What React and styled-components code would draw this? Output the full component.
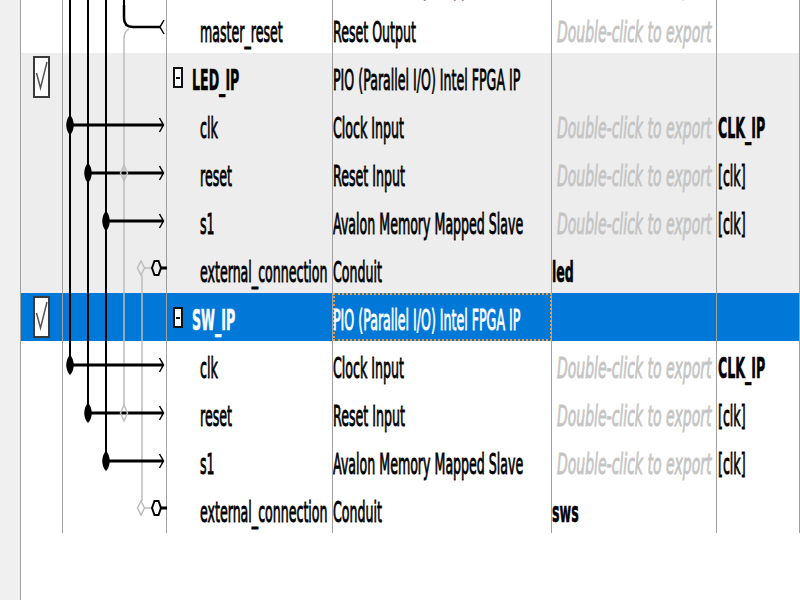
import React from 'react';
import styled, { createGlobalStyle } from 'styled-components';

const GlobalStyle = createGlobalStyle`
  html, body { margin: 0; padding: 0; background: #fff; overflow: hidden; }
  body { font-family: "DejaVu Sans", "Liberation Sans", sans-serif; }
`;

const COLS = '42px 104px 166px 219px 165px 83px';
const BG = { white: '#ffffff', gray: '#ededed', selected: '#0078d7' };
const INK = '#000';
const WIRE_GRAY = '#bdbdbd';

const Page = styled.div`
  display: flex;
  width: 800px;
  height: 600px;
  overflow: hidden;
  background: #fff;
`;

const SideStrip = styled.div`
  flex: 0 0 20px;
  background: #f0f0f0;
  border-right: 1px solid #a0a0a0;
`;

const Viewport = styled.div`
  flex: 1;
  overflow: hidden;
`;

const Rows = styled.div`
  display: flex;
  flex-direction: column;
  margin-top: -43px;
`;

const Row = styled.div`
  display: grid;
  grid-template-columns: ${COLS};
  height: 48px;
  background: ${(p) => BG[p.$tone]};
`;

const Cell = styled.div`
  box-sizing: border-box;
  height: 48px;
  border-right: 1px solid #a0a0a0;
  overflow: hidden;
  position: relative;
`;

const CheckCell = styled(Cell)`
  display: flex;
  justify-content: center;
  align-items: center;
`;

const CheckBox = styled.span`
  box-sizing: border-box;
  width: 17px;
  height: 42px;
  border: 2px solid #3a3a3a;
  background: #fff;
  display: flex;
`;

const WireCell = styled(Cell)`
  overflow: visible;
`;

const TextCell = styled(Cell)`
  padding: 7px 0 0 ${(p) => p.$indent || 0}px;
  white-space: nowrap;
`;

const FocusCell = styled(TextCell)`
  outline: 2px dotted #f09a3a;
  outline-offset: -2px;
`;

const HeaderNameCell = styled(Cell)`
  display: flex;
  align-items: flex-start;
  padding: 7px 0 0 6px;
  white-space: nowrap;
`;

const Toggle = styled.span`
  box-sizing: border-box;
  flex: none;
  width: 10px;
  height: 21px;
  margin-top: 7px;
  margin-right: 9px;
  border: 2px solid #111;
  background: #fff;
  display: flex;
  align-items: center;
  justify-content: center;
`;

const ToggleBar = styled.span`
  width: 4px;
  height: 2px;
  background: #111;
`;

const Label = styled.span`
  display: inline-block;
  white-space: nowrap;
  font-family: "DejaVu Sans", "Liberation Sans", sans-serif;
  font-size: 28px;
  line-height: 41px;
  font-weight: ${(p) => (p.$bold ? 700 : 400)};
  font-style: ${(p) => (p.$hint ? 'italic' : 'normal')};
  color: ${(p) => (p.$hint ? '#c4c4c4' : p.$inverse ? '#fff' : INK)};
  -webkit-text-stroke: ${(p) => (p.$bold ? 0.6 : 0.9)}px currentColor;
  transform: scaleX(${(p) => (p.$hint ? 0.5 : 0.45)});
  transform-origin: 0 50%;
`;

const CheckMark = () => (
  <svg width="13" height="38" viewBox="0 0 13 38">
    <polyline points="1.5,15 5.5,30 12,4" fill="none" stroke="#555" strokeWidth="1.5" />
  </svg>
);

/* ---- connection diagram drawing ---- */
const lens = (x, y) =>
  `M${x} ${y - 10} C${x + 5} ${y - 5} ${x + 5} ${y + 5} ${x} ${y + 10} C${x - 5} ${y + 5} ${x - 5} ${y - 5} ${x} ${y - 10} Z`;

const Wires = ({ lines = [], input, tap, output, conduit }) => (
  <svg width="104" height="48" viewBox="63 0 104 48" style={{ display: 'block', overflow: 'visible' }}>
    {lines
      .filter((l) => l[1] === 'g')
      .map(([x, , y1, y2], i) => (
        <line key={'g' + i} x1={x} x2={x} y1={y1} y2={y2} stroke={WIRE_GRAY} strokeWidth="1.5" />
      ))}
    {output && (
      <g>
        <path d="M129 24 Q124 26 124 35 V48" fill="none" stroke={WIRE_GRAY} strokeWidth="1.5" />
        <path d="M124 0 V13 Q124 22 133 22 H160" fill="none" stroke={INK} strokeWidth="2.5" />
        <polyline points="164,15 160,22 164,29" fill="none" stroke={INK} strokeWidth="1.5" />
      </g>
    )}
    {lines
      .filter((l) => l[1] === 'b')
      .map(([x, , y1, y2], i) => (
        <line key={'b' + i} x1={x} x2={x} y1={y1} y2={y2} stroke={INK} strokeWidth="2" />
      ))}
    {input && (
      <g>
        <rect x={input} y="22.5" width={163 - input} height="3" fill={INK} />
        <polyline points="159.5,17 163.5,24 159.5,31" fill="none" stroke={INK} strokeWidth="1.5" />
        <path d={lens(input, 24)} fill={INK} />
      </g>
    )}
    {tap && (
      <polygon
        points={`${tap},16 ${tap + 3.5},24 ${tap},32 ${tap - 3.5},24`}
        fill="none"
        stroke={WIRE_GRAY}
        strokeWidth="1.5"
      />
    )}
    {conduit && (
      <g>
        <polygon points="141,16 144.5,23 141,30 137.5,23" fill="none" stroke={WIRE_GRAY} strokeWidth="1.5" />
        <line x1="144.5" x2="152" y1="23" y2="23" stroke={WIRE_GRAY} strokeWidth="1.5" />
        <polygon
          points="152,23 154.5,16 158.5,16 161,23 158.5,30 154.5,30"
          fill="none"
          stroke={INK}
          strokeWidth="2"
        />
        <rect x="161" y="21.5" width="6" height="3" fill={INK} />
      </g>
    )}
  </svg>
);

const F = (x, t) => [x, t, 0, 48];
const T = (x, t, end = 24) => [x, t, 0, end];
const B = (x, t, start = 24) => [x, t, start, 48];

const HINT = { text: 'Double-click to export', hint: true };

const rows = [
  {
    tone: 'white',
    name: '',
    desc: 'Avalon Memory Mapped Slave',
    exp: HINT,
    wires: { lines: [F(70, 'b'), F(88, 'b'), F(106, 'b'), F(124, 'b')] },
  },
  {
    tone: 'white',
    name: 'master_reset',
    desc: 'Reset Output',
    exp: HINT,
    wires: { lines: [F(70, 'b'), F(88, 'b'), F(106, 'b')], output: true },
  },
  {
    tone: 'gray',
    header: true,
    name: 'LED_IP',
    desc: 'PIO (Parallel I/O) Intel FPGA IP',
    wires: { lines: [F(70, 'b'), F(88, 'b'), F(106, 'b'), F(124, 'g')] },
  },
  {
    tone: 'gray',
    name: 'clk',
    desc: 'Clock Input',
    exp: HINT,
    clock: { text: 'CLK_IP', bold: true },
    wires: { lines: [F(70, 'b'), F(88, 'b'), F(106, 'b'), F(124, 'g')], input: 70 },
  },
  {
    tone: 'gray',
    name: 'reset',
    desc: 'Reset Input',
    exp: HINT,
    clock: { text: '[clk]' },
    wires: { lines: [F(70, 'b'), F(88, 'b'), F(106, 'b'), F(124, 'g')], input: 88, tap: 124 },
  },
  {
    tone: 'gray',
    name: 's1',
    desc: 'Avalon Memory Mapped Slave',
    exp: HINT,
    clock: { text: '[clk]' },
    wires: { lines: [F(70, 'b'), F(88, 'b'), F(106, 'b'), F(124, 'g')], input: 106 },
  },
  {
    tone: 'gray',
    name: 'external_connection',
    desc: 'Conduit',
    exp: { text: 'led', bold: true },
    wires: { lines: [F(70, 'b'), F(88, 'b'), F(106, 'b'), F(124, 'g'), B(142, 'g', 30)], conduit: true },
  },
  {
    tone: 'selected',
    header: true,
    name: 'SW_IP',
    desc: 'PIO (Parallel I/O) Intel FPGA IP',
    focus: true,
    wires: { lines: [F(70, 'b'), F(88, 'b'), F(106, 'b'), F(124, 'g'), F(142, 'g')] },
  },
  {
    tone: 'white',
    name: 'clk',
    desc: 'Clock Input',
    exp: HINT,
    clock: { text: 'CLK_IP', bold: true },
    wires: { lines: [T(70, 'b'), F(88, 'b'), F(106, 'b'), F(124, 'g'), F(142, 'g')], input: 70 },
  },
  {
    tone: 'white',
    name: 'reset',
    desc: 'Reset Input',
    exp: HINT,
    clock: { text: '[clk]' },
    wires: { lines: [T(88, 'b'), F(106, 'b'), T(124, 'g', 16), F(142, 'g')], input: 88, tap: 124 },
  },
  {
    tone: 'white',
    name: 's1',
    desc: 'Avalon Memory Mapped Slave',
    exp: HINT,
    clock: { text: '[clk]' },
    wires: { lines: [T(106, 'b'), F(142, 'g')], input: 106 },
  },
  {
    tone: 'white',
    name: 'external_connection',
    desc: 'Conduit',
    exp: { text: 'sws', bold: true },
    wires: { lines: [T(142, 'g', 16)], conduit: true },
  },
];

const ComponentRow = ({ r }) => {
  const inv = r.tone === 'selected';
  const DescCell = r.focus ? FocusCell : TextCell;
  return (
    <Row $tone={r.tone}>
      <CheckCell>
        {r.header && (
          <CheckBox>
            <CheckMark />
          </CheckBox>
        )}
      </CheckCell>
      <WireCell>
        <Wires {...r.wires} />
      </WireCell>
      {r.header ? (
        <HeaderNameCell>
          <Toggle>
            <ToggleBar />
          </Toggle>
          <Label $bold $inverse={inv}>{r.name}</Label>
        </HeaderNameCell>
      ) : (
        <TextCell $indent={33}>
          <Label $inverse={inv}>{r.name}</Label>
        </TextCell>
      )}
      <DescCell>
        <Label $inverse={inv}>{r.desc}</Label>
      </DescCell>
      <TextCell $indent={r.exp && r.exp.hint ? 5 : 0}>
        {r.exp && (
          <Label $hint={r.exp.hint} $bold={r.exp.bold} $inverse={inv}>
            {r.exp.text}
          </Label>
        )}
      </TextCell>
      <TextCell $indent={1}>
        {r.clock && (
          <Label $bold={r.clock.bold} $inverse={inv}>
            {r.clock.text}
          </Label>
        )}
      </TextCell>
    </Row>
  );
};

export default function App() {
  return (
    <>
      <GlobalStyle />
      <Page>
        <SideStrip />
        <Viewport>
          <Rows>
            {rows.map((r, i) => (
              <ComponentRow key={i} r={r} />
            ))}
          </Rows>
        </Viewport>
      </Page>
    </>
  );
}
